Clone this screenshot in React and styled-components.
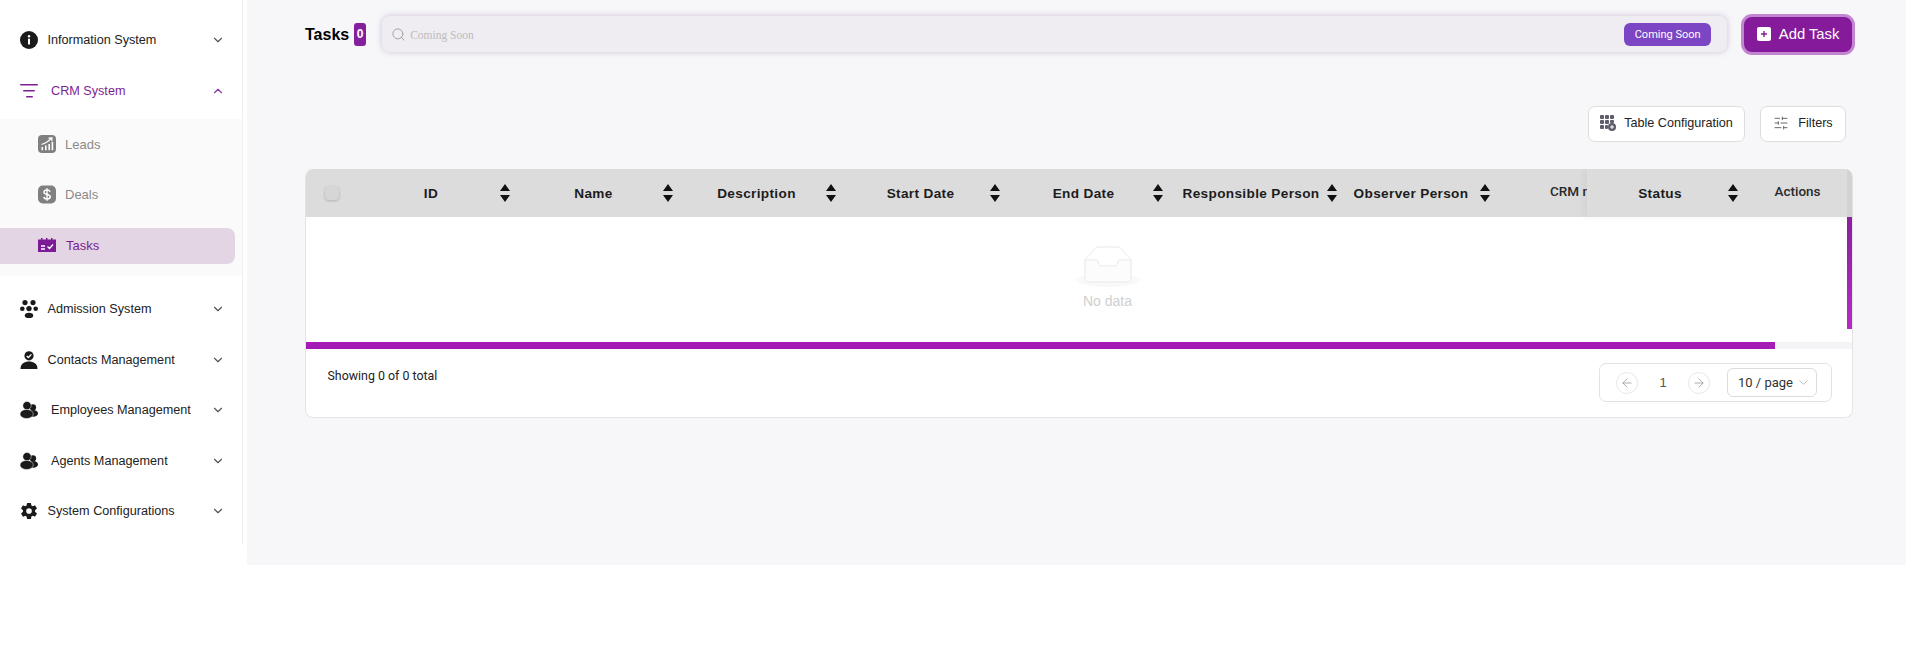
import React from "react";
import styled, { createGlobalStyle } from "styled-components";
import { ChevronDown, ChevronUp, Search, SlidersHorizontal, ArrowLeft, ArrowRight } from "lucide-react";
import { IoSettingsSharp } from "react-icons/io5";

const Global = createGlobalStyle`
  html, body { margin: 0; padding: 0; background: #fff; }
  body { font-family: "Liberation Sans", Arial, sans-serif; color: #222; }
`;

const Page = styled.div`
  display: flex;
  align-items: flex-start;
  width: 1906px;
  height: 648px;
  overflow: hidden;
`;

const Sidebar = styled.aside`
  box-sizing: border-box;
  width: 243px;
  height: 545px;
  padding-top: 14.5px;
  border-right: 1px solid #f0f0f0;
  flex: none;
`;

const MenuRow = styled.div`
  display: flex;
  align-items: center;
  height: ${p => p.$h || 50.5}px;
  padding: 0 17px 0 ${p => p.$pad || 20}px;
  font-size: 12.65px;
  color: ${p => (p.$active ? "#7b1f92" : "#222")};
`;

const IconSlot = styled.span`
  display: flex;
  align-items: center;
  justify-content: center;
  width: 18px;
  height: 18px;
  margin-right: ${p => p.$gap || 10}px;
  flex: none;
`;

const MenuLabel = styled.span`
  flex: 1;
`;

const ChevronSlot = styled.span`
  display: flex;
  color: ${p => (p.$active ? "#8a3aa0" : "#555")};
`;

const SubMenu = styled.div`
  background: #fafafa;
  height: 157px;
  margin-bottom: 8.5px;
`;

const SubRow = styled.div`
  display: flex;
  align-items: center;
  box-sizing: border-box;
  width: 235px;
  height: ${p => p.$h}px;
  margin-top: ${p => p.$mt || 0}px;
  margin-bottom: ${p => p.$mb || 0}px;
  padding-left: 38px;
  border-radius: 0 8px 8px 0;
  font-size: 13px;
  background: ${p => (p.$active ? "#e4d5e5" : "transparent")};
  color: ${p => (p.$active ? "#7b1f92" : "#8a8a8a")};
`;

const Main = styled.main`
  box-sizing: border-box;
  width: 1659px;
  height: 565px;
  margin-left: 4px;
  padding: 13px 51px 0 58px;
  background: #f7f7fa;
  flex: none;
`;

const TopBar = styled.div`
  display: flex;
  align-items: center;
  height: 42px;
`;

const Title = styled.h1`
  margin: 2px 5px 0 0;
  font-size: 16px;
  font-weight: 700;
  color: #000;
`;

const CountBadge = styled.span`
  display: flex;
  align-items: center;
  justify-content: center;
  width: 12px;
  height: 23px;
  margin-right: 16px;
  border-radius: 3px;
  background: #851f9c;
  color: #fff;
  font-size: 12px;
  font-weight: 700;
`;

const SearchBox = styled.div`
  box-sizing: border-box;
  display: flex;
  align-items: center;
  width: 1347px;
  height: 36px;
  padding: 0 16px 0 9px;
  border-radius: 8px;
  background: #efedf1;
  box-shadow: 0 0 6px rgba(110, 70, 120, 0.3);
  color: #999;
`;

const Placeholder = styled.span`
  flex: 1;
  margin: 2px 0 0 4px;
  font-family: "Liberation Serif", serif;
  font-size: 11.5px;
  color: #bdbbbf;
`;

const SoonChip = styled.span`
  display: flex;
  align-items: center;
  justify-content: center;
  width: 87px;
  height: 23px;
  border-radius: 6px;
  background: #7c45c3;
  color: #fff;
  font-size: 11px;
  font-family: Roboto, sans-serif;
`;

const AddButton = styled.button`
  box-sizing: border-box;
  display: flex;
  align-items: center;
  justify-content: center;
  gap: 8px;
  width: 114px;
  height: 41px;
  margin-left: 14px;
  border: 3px solid #c286d0;
  border-radius: 11px;
  background: #851b9b;
  color: #fff;
  font-family: "Liberation Sans", sans-serif;
  font-size: 14.8px;
`;

const Toolbar = styled.div`
  display: flex;
  justify-content: flex-end;
  gap: 15px;
  margin: 51px 9px 0 0;
`;

const ToolButton = styled.button`
  box-sizing: border-box;
  display: flex;
  align-items: center;
  justify-content: center;
  gap: ${p => p.$gap}px;
  width: ${p => p.$w}px;
  height: 36px;
  padding-bottom: 4px;
  border: 1px solid #dedede;
  border-radius: 7px;
  background: #fff;
  color: #222;
  font-family: "Liberation Sans", sans-serif;
  font-size: 12.6px;
`;

const Card = styled.section`
  box-sizing: border-box;
  width: 1548px;
  height: 249px;
  margin-top: 27px;
  border: 1px solid #e4e4e4;
  border-top: 0;
  border-radius: 8px;
  background: #fff;
  overflow: hidden;
`;

const HeadRow = styled.div`
  display: flex;
  height: 48px;
  background: #dcdcdc;
`;

const ScrollCols = styled.div`
  display: flex;
  flex: 1;
  min-width: 0;
  overflow: hidden;
`;

const FixedCols = styled.div`
  display: flex;
  flex: none;
  box-shadow: -4px 0 6px rgba(0, 0, 0, 0.04);
  border-right: 5px solid #d2d2d2;
`;

const CheckCell = styled.div`
  display: flex;
  align-items: center;
  flex: none;
  width: 33px;
  padding-left: 19px;
`;

const CheckBox = styled.span`
  width: 14px;
  height: 14px;
  border-radius: 4px;
  background: #d6d6d6;
  box-shadow: 0 1px 3px rgba(0, 0, 0, 0.2);
`;

const HeadCell = styled.div`
  box-sizing: border-box;
  display: flex;
  align-items: center;
  flex: none;
  width: ${p => p.$w}px;
  padding-right: ${p => p.$pr ?? 10}px;
`;

const HeadLabel = styled.span`
  flex: 1;
  text-align: center;
  white-space: nowrap;
  padding: 0 ${p => p.$rt || 0}px 0 ${p => p.$lf || 0}px;
  font-size: 13.6px;
  font-weight: 700;
  letter-spacing: 0.35px;
  color: #1c1c1c;
`;

const PlainHeadLabel = styled.span`
  flex: 1;
  white-space: nowrap;
  text-align: ${p => p.$align || "center"};
  padding-bottom: 5px;
  padding-left: ${p => p.$pl || 0}px;
  font-family: Roboto, sans-serif;
  font-size: 13.5px;
  font-weight: 500;
  color: #2a2a2a;
`;

const BodyRow = styled.div`
  display: flex;
  height: 125px;
`;

const Empty = styled.div`
  display: flex;
  flex: 1;
  flex-direction: column;
  align-items: center;
  margin-left: 62px;
  padding-top: 29px;
  color: #cfcfcf;
  font-size: 14px;
`;

const EmptyIcon = styled.svg`
  opacity: 0.55;
  margin-bottom: 6px;
`;

const VScroll = styled.div`
  width: 5px;
  height: 112px;
  background: linear-gradient(#8a1f9f, #b62ac6);
  flex: none;
`;

const HTrack = styled.div`
  height: 7px;
  background: #f4f4f6;
`;

const HThumb = styled.div`
  height: 7px;
  background: #a51bb5;
`;

const Footer = styled.div`
  display: flex;
  justify-content: space-between;
  padding: 14px 20px 0 21.5px;
`;

const FootText = styled.span`
  margin-top: 5px;
  font-family: Roboto, sans-serif;
  font-size: 12.4px;
  color: #222;
`;

const Pager = styled.div`
  box-sizing: border-box;
  display: flex;
  align-items: center;
  width: 233px;
  height: 39px;
  padding: 0 14px 0 16px;
  border: 1px solid #e2e2e2;
  border-radius: 7px;
`;

const PageArrow = styled.span`
  display: flex;
  align-items: center;
  justify-content: center;
  box-sizing: border-box;
  width: 22px;
  height: 22px;
  border: 1px solid #e8e8ee;
  border-radius: 50%;
  color: #9a9a9a;
`;

const PageNum = styled.span`
  width: 50px;
  text-align: center;
  font-size: 13px;
  color: #555;
`;

const PageSize = styled.span`
  box-sizing: border-box;
  display: flex;
  align-items: center;
  justify-content: space-between;
  width: 90px;
  height: 29px;
  margin-left: 17px;
  padding: 0 5px 0 10px;
  border: 1px solid #dcdcdc;
  border-radius: 6px;
  font-family: Roboto, sans-serif;
  font-size: 13px;
  color: #333;
`;

const Info = () => (
  <svg width="18" height="18" viewBox="0 0 18 18">
    <circle cx="9" cy="9" r="9" fill="#1a1a1a" />
    <circle cx="9" cy="5.2" r="1.2" fill="#fff" />
    <rect x="8" y="7.6" width="2" height="6" rx=".6" fill="#fff" />
  </svg>
);
const Lines = () => (
  <svg width="18" height="14" viewBox="0 0 18 14">
    <g fill="#7b1f92">
      <rect x="0" y="0" width="18" height="1.6" rx=".8" />
      <rect x="3" y="6" width="12" height="1.6" rx=".8" />
      <rect x="6" y="12" width="7" height="1.6" rx=".8" />
    </g>
  </svg>
);
const LeadsIcon = () => (
  <svg width="18" height="18" viewBox="0 0 18 18">
    <rect width="18" height="18" rx="4" fill="#808080" />
    <g fill="#fff">
      <rect x="3.5" y="12" width="1.6" height="3.2" />
      <rect x="7" y="10.5" width="1.6" height="4.7" />
      <rect x="10.4" y="9" width="1.6" height="6.2" />
      <rect x="13.6" y="7" width="1.6" height="8.2" />
    </g>
    <path d="M3.5 9.5 Q9 8 13 3.6 M10.5 3.2 L14 3 L13.8 6.4" stroke="#fff" strokeWidth="1.2" fill="none" />
  </svg>
);
const DealsIcon = () => (
  <svg width="19" height="19" viewBox="0 0 19 19">
    <rect width="19" height="19" rx="5" fill="#808080" />
    <path d="M12.7 6.6 C12.3 5.2 11 4.7 9.5 4.7 C7.8 4.7 6.3 5.5 6.3 7 C6.3 10.3 13 8.6 13 12 C13 13.5 11.4 14.3 9.5 14.3 C7.8 14.3 6.4 13.6 6 12.2 M9.5 2.8 V16.2" stroke="#fff" strokeWidth="1.5" fill="none" />
  </svg>
);
const TasksIcon = () => (
  <svg width="18" height="15" viewBox="0 0 18 15">
    <path d="M0 1.5 H3 V0 H4.5 V1.5 H8 V0 H9.5 V1.5 H13 V0 H14.5 V1.5 H18 V14 H0 Z" fill="#7b1c96" />
    <path d="M3 8 H7 M3 11 H7 M9.5 8.5 L11.5 10.5 L15 6.5" stroke="#fff" strokeWidth="1.3" fill="none" />
  </svg>
);
const GroupIcon = () => (
  <svg width="18" height="18" viewBox="0 0 18 18">
    <g fill="#1a1a1a">
      <circle cx="5" cy="2.6" r="2.6" />
      <circle cx="13" cy="2.6" r="2.6" />
      <circle cx="9" cy="8.6" r="2.7" />
      <ellipse cx="2.3" cy="8.8" rx="2.3" ry="2.2" />
      <ellipse cx="15.7" cy="8.8" rx="2.3" ry="2.2" />
      <ellipse cx="9" cy="15.4" rx="4.2" ry="2.6" />
    </g>
  </svg>
);
const ContactIcon = () => (
  <svg width="18" height="18" viewBox="0 0 18 18">
    <circle cx="9" cy="4.8" r="4.6" fill="#1a1a1a" />
    <path d="M6.7 5 L8.4 6.5 L11.4 3.4" stroke="#fff" strokeWidth="1.3" fill="none" />
    <path d="M0.5 18 C0.5 12.5 4.5 10.6 9 10.6 C13.5 10.6 17.5 12.5 17.5 18 Z" fill="#1a1a1a" />
  </svg>
);
const PeopleIcon = () => (
  <svg width="19" height="18" viewBox="0 0 19 18">
    <g fill="#1a1a1a">
      <circle cx="13.6" cy="6.2" r="3.4" />
      <ellipse cx="14" cy="12.6" rx="5" ry="3.6" />
    </g>
    <circle cx="7.4" cy="4.4" r="4.4" fill="#1a1a1a" stroke="#fff" strokeWidth=".5" />
    <ellipse cx="7" cy="13.2" rx="7" ry="4.8" fill="#1a1a1a" stroke="#fff" strokeWidth=".5" />
  </svg>
);
const AddIcon = () => (
  <svg width="14" height="14" viewBox="0 0 14 14">
    <rect width="14" height="14" rx="2" fill="#fff" />
    <path d="M7 4 V10 M4 7 H10" stroke="#851b9b" strokeWidth="1.4" />
  </svg>
);
const GridIcon = () => (
  <svg width="16" height="16" viewBox="0 0 16 16">
    <g fill="#5d5d6b">
      <rect x="0" y="0" width="4" height="4" rx="1" />
      <rect x="5" y="0" width="4" height="4" rx="1" />
      <rect x="10" y="0" width="4" height="4" rx="1" />
      <rect x="0" y="5" width="4" height="4" rx="1" />
      <rect x="5" y="5" width="4" height="4" rx="1" />
      <rect x="10" y="5" width="4" height="3" rx="1" />
      <rect x="0" y="10" width="4" height="4" rx="1" />
      <rect x="5" y="10" width="3" height="4" rx="1" />
      <circle cx="12" cy="12" r="4" />
    </g>
    <path d="M12 10 V14 M10 12 H14" stroke="#fff" strokeWidth="1" />
  </svg>
);
const SortSvg = styled.svg`
  flex: none;
  margin-right: 1px;
`;
const Sort = () => (
  <SortSvg width="10" height="18" viewBox="0 0 10 18">
    <path d="M5 0 L10 7 H0 Z M0 11 H10 L5 18 Z" fill="#111" />
  </SortSvg>
);

const chevron = active =>
  active ? <ChevronUp size={14} strokeWidth={2} /> : <ChevronDown size={14} strokeWidth={2} />;

const Item = ({ icon, label, gap, active, h }) => (
  <MenuRow $active={active} $h={h}>
    <IconSlot $gap={gap}>{icon}</IconSlot>
    <MenuLabel>{label}</MenuLabel>
    <ChevronSlot $active={active}>{chevron(active)}</ChevronSlot>
  </MenuRow>
);

const columns = [
  ["ID", 162, 9, 4, 0],
  ["Name", 163, 9, 4, 0],
  ["Description", 163, 9, 4, 0],
  ["Start Date", 164, 9, 5, 0],
  ["End Date", 163, 9, 4, 0],
  ["Responsible Person", 174, 9, 2, 0],
  ["Observer Person", 153, 9, 0, 5],
];

export default function App() {
  return (
    <Page>
      <Global />
      <Sidebar>
        <Item icon={<Info />} label="Information System" gap={9.5} />
        <Item icon={<Lines />} label="CRM System" gap={13} active h={51} />
        <SubMenu>
          <SubRow $h={51} $mt={2.5}><IconSlot $gap={9}><LeadsIcon /></IconSlot>Leads</SubRow>
          <SubRow $h={50}><IconSlot $gap={9}><DealsIcon /></IconSlot>Deals</SubRow>
          <SubRow $h={36} $mt={8} $active><IconSlot $gap={10}><TasksIcon /></IconSlot>Tasks</SubRow>
        </SubMenu>
        <Item icon={<GroupIcon />} label="Admission System" gap={9.5} />
        <Item icon={<ContactIcon />} label="Contacts Management" gap={9.5} />
        <Item icon={<PeopleIcon />} label="Employees Management" gap={13} />
        <Item icon={<PeopleIcon />} label="Agents Management" gap={13} />
        <Item icon={<IoSettingsSharp size={18} color="#1a1a1a" />} label="System Configurations" gap={9.5} />
      </Sidebar>
      <Main>
        <TopBar>
          <Title>Tasks</Title>
          <CountBadge>0</CountBadge>
          <SearchBox>
            <Search size={15} strokeWidth={1.4} />
            <Placeholder>Coming Soon</Placeholder>
            <SoonChip>Coming Soon</SoonChip>
          </SearchBox>
          <AddButton><AddIcon />Add Task</AddButton>
        </TopBar>
        <Toolbar>
          <ToolButton $w={157} $gap={8}><GridIcon />Table Configuration</ToolButton>
          <ToolButton $w={86} $gap={9}><SlidersHorizontal size={16} strokeWidth={1.3} color="#555" />Filters</ToolButton>
        </Toolbar>
        <Card>
          <HeadRow>
            <ScrollCols>
              <CheckCell><CheckBox /></CheckCell>
              {columns.map(([label, w, pr, lf, rt]) => (
                <HeadCell key={label} $w={w} $pr={pr}>
                  <HeadLabel $lf={lf} $rt={rt}>{label}</HeadLabel>
                  <Sort />
                </HeadCell>
              ))}
              <HeadCell $w={160} $pr={0}>
                <PlainHeadLabel $align="left" $pl={50}>CRM number</PlainHeadLabel>
              </HeadCell>
            </ScrollCols>
            <FixedCols>
              <HeadCell $w={161} $pr={9}>
                <HeadLabel $lf={5}>Status</HeadLabel>
                <Sort />
              </HeadCell>
              <HeadCell $w={99} $pr={0}>
                <PlainHeadLabel>Actions</PlainHeadLabel>
              </HeadCell>
            </FixedCols>
          </HeadRow>
          <BodyRow>
            <Empty>
              <EmptyIcon width="64" height="41" viewBox="0 0 64 41">
                <g transform="translate(0 1)" fill="none" fillRule="evenodd">
                  <ellipse fill="#f5f5f5" cx="32" cy="33" rx="32" ry="7" />
                  <g fillRule="nonzero" stroke="#d9d9d9">
                    <path d="M55 12.76L44.854 1.258C44.367.474 43.656 0 42.907 0H21.093c-.749 0-1.46.474-1.947 1.257L9 12.761V22h46v-9.24z" />
                    <path d="M41.613 15.931c0-1.605.994-2.93 2.227-2.931H55v18.137C55 33.26 53.68 35 52.05 35h-40.1C10.32 35 9 33.259 9 31.137V13h11.16c1.233 0 2.227 1.323 2.227 2.928v.022c0 1.605 1.005 2.901 2.237 2.901h14.752c1.232 0 2.237-1.308 2.237-2.913v-.007z" fill="#fafafa" />
                  </g>
                </g>
              </EmptyIcon>
              No data
            </Empty>
            <VScroll />
          </BodyRow>
          <HTrack><HThumb style={{ width: "95%" }} /></HTrack>
          <Footer>
            <FootText>Showing 0 of 0 total</FootText>
            <Pager>
              <PageArrow><ArrowLeft size={14} strokeWidth={1.4} /></PageArrow>
              <PageNum>1</PageNum>
              <PageArrow><ArrowRight size={14} strokeWidth={1.4} /></PageArrow>
              <PageSize>10 / page<ChevronDown size={15} strokeWidth={1} color="#999" /></PageSize>
            </Pager>
          </Footer>
        </Card>
      </Main>
    </Page>
  );
}
